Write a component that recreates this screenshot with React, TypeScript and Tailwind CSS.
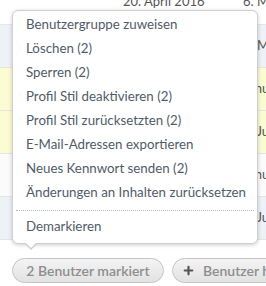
import { Plus } from 'lucide-react';

const rows = [
  { bg: 'bg-[#eef1f7]', right: '6. März 2016' },
  { bg: 'bg-[#fcfcd4]', right: 'Januar 2016' },
  { bg: 'bg-[#fcfcd4]', right: '3. Juni 2016' },
  { bg: 'bg-[#fbfbfb]', right: 'Januar 2016' },
  { bg: 'bg-[#eef1f7]', right: '4. Juli 2016' },
];

const menuItems = [
  'Benutzergruppe zuweisen',
  'Löschen (2)',
  'Sperren (2)',
  'Profil Stil deaktivieren (2)',
  'Profil Stil zurücksetzten (2)',
  'E-Mail-Adressen exportieren',
  'Neues Kennwort senden (2)',
  'Änderungen an Inhalten zurücksetzen',
];

export default function App() {
  return (
    <div className="relative w-[266px] h-[286px] overflow-hidden bg-white font-['Lato',sans-serif] text-[#555]">
      {/* Table behind the menu */}
      <div className="flex flex-col">
        <div className="h-[25px] flex items-start text-[13px] leading-[14px] whitespace-nowrap border-b border-[#e3e6ec]">
          <span className="ml-[123px] w-[120px] shrink-0 -mt-[6px]">20. April 2016</span>
          <span className="shrink-0 -mt-[6px]">6. März 2016</span>
        </div>
        {rows.map((r, i) => (
          <div
            key={i}
            className={`h-[43px] flex items-center border-b border-[#e4e6e0] text-[13px] whitespace-nowrap ${r.bg}`}
          >
            <span className="ml-[243px]">{r.right}</span>
          </div>
        ))}
      </div>

      {/* Toolbar */}
      <div className="flex items-center gap-2 pl-3 pt-[18px]">
        <button className="h-[25px] w-[152px] shrink-0 rounded-full border border-[#c4c4c4] bg-gradient-to-b from-[#f4f4f4] to-[#e2e2e2] text-[14px] font-semibold text-[#8e8e8e]">
          2 Benutzer markiert
        </button>
        <button className="h-[25px] shrink-0 flex items-center gap-2 rounded-full border border-[#c4c4c4] bg-gradient-to-b from-[#f4f4f4] to-[#e2e2e2] pl-[9px] pr-4 text-[14px] font-semibold text-[#8e8e8e] whitespace-nowrap">
          <Plus size={13} strokeWidth={4} className="text-[#555]" />
          Benutzer hinzufügen
        </button>
      </div>

      {/* Dropdown menu */}
      <div className="absolute left-[12px] top-[10px] w-[246px] rounded-[6px] border border-[#cfcfcf] bg-white pt-[2px] pb-[4px] shadow-[0_1px_4px_rgba(0,0,0,0.2)]">
        {menuItems.map((t) => (
          <div key={t} className="h-[24px] flex items-center px-[13px] text-[13.3px] text-[#515b68] whitespace-nowrap">
            {t}
          </div>
        ))}
        <div className="mx-[3px] mt-[5px] mb-[4px] border-t border-dotted border-[#b8b8b8]" />
        <div className="h-[24px] flex items-center px-[13px] text-[13.3px] text-[#515b68]">Demarkieren</div>
        <div className="absolute left-[11px] -bottom-[7px] w-0 h-0 border-l-[7px] border-r-[7px] border-t-[7px] border-l-transparent border-r-transparent border-t-[#cfcfcf]" />
        <div className="absolute left-[12px] -bottom-[5px] w-0 h-0 border-l-[6px] border-r-[6px] border-t-[6px] border-l-transparent border-r-transparent border-t-white" />
      </div>
    </div>
  );
}
